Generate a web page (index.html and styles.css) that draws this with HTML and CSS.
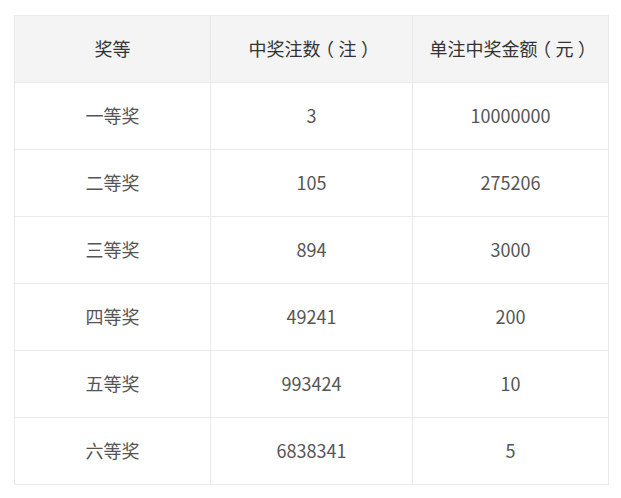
FILE: index.html
```html
<!DOCTYPE html>
<html lang="zh-CN">
<head>
<meta charset="utf-8">
<link rel="stylesheet" href="styles.css">
</head>
<body>
<table class="prize-table">
  <colgroup>
    <col class="c1"><col class="c2"><col class="c3">
  </colgroup>
  <thead>
    <tr><th>奖等</th><th>中奖注数<span class="pp">（</span>注<span class="pp">）</span></th><th>单注中奖金额<span class="pp">（</span>元<span class="pp">）</span></th></tr>
  </thead>
  <tbody>
    <tr><td>一等奖</td><td>3</td><td>10000000</td></tr>
    <tr><td>二等奖</td><td>105</td><td>275206</td></tr>
    <tr><td>三等奖</td><td>894</td><td>3000</td></tr>
    <tr><td>四等奖</td><td>49241</td><td>200</td></tr>
    <tr><td>五等奖</td><td>993424</td><td>10</td></tr>
    <tr><td>六等奖</td><td>6838341</td><td>5</td></tr>
  </tbody>
</table>
</body>
</html>
```

FILE: styles.css
```css
html, body {
  margin: 0;
  background: #ffffff;
}
body {
  padding: 15px 14px 0 14px;
  font-family: "Noto Sans CJK SC", "Noto Sans", sans-serif;
}
.prize-table {
  width: 594px;
  border-collapse: collapse;
  table-layout: fixed;
}
.c1 { width: 196px; }
.c2 { width: 202px; }
.c3 { width: 196px; }
.prize-table th,
.prize-table td {
  height: 64px;
  padding: 0 0 2px 0;
  border: 1px solid #e9e9e9;
  text-align: center;
  vertical-align: middle;
  font-size: 18px;
  line-height: 24px;
  text-spacing-trim: space-all;
}
.prize-table th {
  background: #f4f4f4;
  color: #333333;
  font-weight: normal;
}
.prize-table td {
  color: #555555;
}
.pp {
  font-feature-settings: "halt" 1;
  padding: 0 0.25em;
}
```
